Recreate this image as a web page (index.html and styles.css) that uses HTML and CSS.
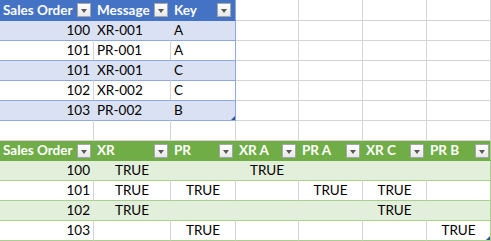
FILE: index.html
```html
<!DOCTYPE html>
<html>
<head>
<meta charset="utf-8">
<link rel="stylesheet" href="styles.css">
</head>
<body>
<div class="sheet">
  <!-- row 1: blue header -->
  <div class="c bh"><span>Sales Order</span><i class="dd"></i></div>
  <div class="c bh"><span>Message</span><i class="dd"></i></div>
  <div class="c bh bl"><span>Key</span><i class="dd"></i></div>
  <div class="c"></div><div class="c"></div><div class="c"></div><div class="c"></div>
  <!-- row 2 -->
  <div class="c bb r">100</div><div class="c bb">XR-001</div><div class="c bb bl">A</div>
  <div class="c"></div><div class="c"></div><div class="c"></div><div class="c"></div>
  <!-- row 3 -->
  <div class="c bw r">101</div><div class="c bw">PR-001</div><div class="c bw bl">A</div>
  <div class="c"></div><div class="c"></div><div class="c"></div><div class="c"></div>
  <!-- row 4 -->
  <div class="c bb r">101</div><div class="c bb">XR-001</div><div class="c bb bl">C</div>
  <div class="c"></div><div class="c"></div><div class="c"></div><div class="c"></div>
  <!-- row 5 -->
  <div class="c bw r">102</div><div class="c bw">XR-002</div><div class="c bw bl">C</div>
  <div class="c"></div><div class="c"></div><div class="c"></div><div class="c"></div>
  <!-- row 6 -->
  <div class="c bb r">103</div><div class="c bb">PR-002</div><div class="c bb bl corner-b">B</div>
  <div class="c"></div><div class="c"></div><div class="c"></div><div class="c"></div>
  <!-- row 7: empty -->
  <div class="c"></div><div class="c"></div><div class="c"></div><div class="c"></div><div class="c"></div><div class="c"></div><div class="c"></div>
  <!-- row 8: green header -->
  <div class="c gh"><span>Sales Order</span><i class="dd"></i></div>
  <div class="c gh"><span>XR</span><i class="dd"></i></div>
  <div class="c gh"><span>PR</span><i class="dd"></i></div>
  <div class="c gh"><span>XR A</span><i class="dd"></i></div>
  <div class="c gh"><span>PR A</span><i class="dd"></i></div>
  <div class="c gh"><span>XR C</span><i class="dd"></i></div>
  <div class="c gh gl"><span>PR B</span><i class="dd"></i></div>
  <!-- row 9 -->
  <div class="c gb r">100</div><div class="c gb m">TRUE</div><div class="c gb"></div><div class="c gb m">TRUE</div><div class="c gb"></div><div class="c gb"></div><div class="c gb gl"></div>
  <!-- row 10 -->
  <div class="c gw r">101</div><div class="c gw m">TRUE</div><div class="c gw m">TRUE</div><div class="c gw"></div><div class="c gw m">TRUE</div><div class="c gw m">TRUE</div><div class="c gw gl"></div>
  <!-- row 11 -->
  <div class="c gb r">102</div><div class="c gb m">TRUE</div><div class="c gb"></div><div class="c gb"></div><div class="c gb"></div><div class="c gb m">TRUE</div><div class="c gb gl"></div>
  <!-- row 12 -->
  <div class="c gw r">103</div><div class="c gw"></div><div class="c gw m">TRUE</div><div class="c gw"></div><div class="c gw"></div><div class="c gw"></div><div class="c gw gl m corner-g">TRUE</div>
</div>
</body>
</html>
```

FILE: styles.css
```css
html, body {
  margin: 0;
  padding: 0;
  background: #ffffff;
}

.sheet {
  display: grid;
  grid-template-columns: 94px 77px 65px 63px 64px 64px 64px;
  grid-template-rows: 21px repeat(6, 20px) 20px repeat(4, 20px);
  font-family: Lato, "Liberation Sans", sans-serif;
  font-size: 13.5px;
  color: #000000;
}

.c {
  box-sizing: border-box;
  border-right: 1px solid #d4d4d4;
  border-bottom: 1px solid #d4d4d4;
  display: flex;
  align-items: center;
  padding: 0 3px;
  line-height: 19px;
  white-space: nowrap;
  overflow: hidden;
  position: relative;
}

.r { justify-content: flex-end; padding-right: 3px; }
.m { justify-content: center; }

/* blue table */
.bh {
  background: #4472c4;
  color: #ffffff;
  font-weight: 700;
  font-size: 13.5px;
  border-right-color: #4472c4;
  border-bottom-color: #4472c4;
  padding-right: 2px;
}
.bb {
  background: #d9e1f2;
  border-right-color: #d9e1f2;
  border-bottom-color: #8ea9db;
}
.bw {
  border-bottom-color: #8ea9db;
}
.bl { border-right-color: #8ea9db; }
.bh.bl { border-right-color: #8ea9db; padding-right: 4px; }

/* green table */
.gh {
  background: #70ad47;
  color: #ffffff;
  font-weight: 700;
  font-size: 13.5px;
  border-right-color: #70ad47;
  border-bottom-color: #70ad47;
  padding-right: 2px;
}
.gb {
  background: #e2efda;
  border-right-color: #e2efda;
  border-bottom-color: #a9d08e;
}
.gw {
  border-bottom-color: #a9d08e;
}
.gl { border-right-color: #a9d08e; }
.gh.gl { border-right-color: #a9d08e; padding-right: 1px; }

/* dropdown button */
.dd {
  margin-left: auto;
  flex: none;
  width: 14px;
  height: 14px;
  box-sizing: border-box;
  border: 1px solid #a6a6a6;
  background: linear-gradient(#ffffff, #e8e8e8);
  position: relative;
}
.dd::after {
  content: "";
  position: absolute;
  left: 3px;
  top: 5px;
  border-left: 3.5px solid transparent;
  border-right: 3.5px solid transparent;
  border-top: 4px solid #595959;
}

/* resize handles */
.corner-b::after, .corner-g::after {
  content: "";
  position: absolute;
  right: 0;
  bottom: 0;
  width: 0;
  height: 0;
  border-left: 4px solid transparent;
  border-bottom: 4px solid #2f5597;
}
```
